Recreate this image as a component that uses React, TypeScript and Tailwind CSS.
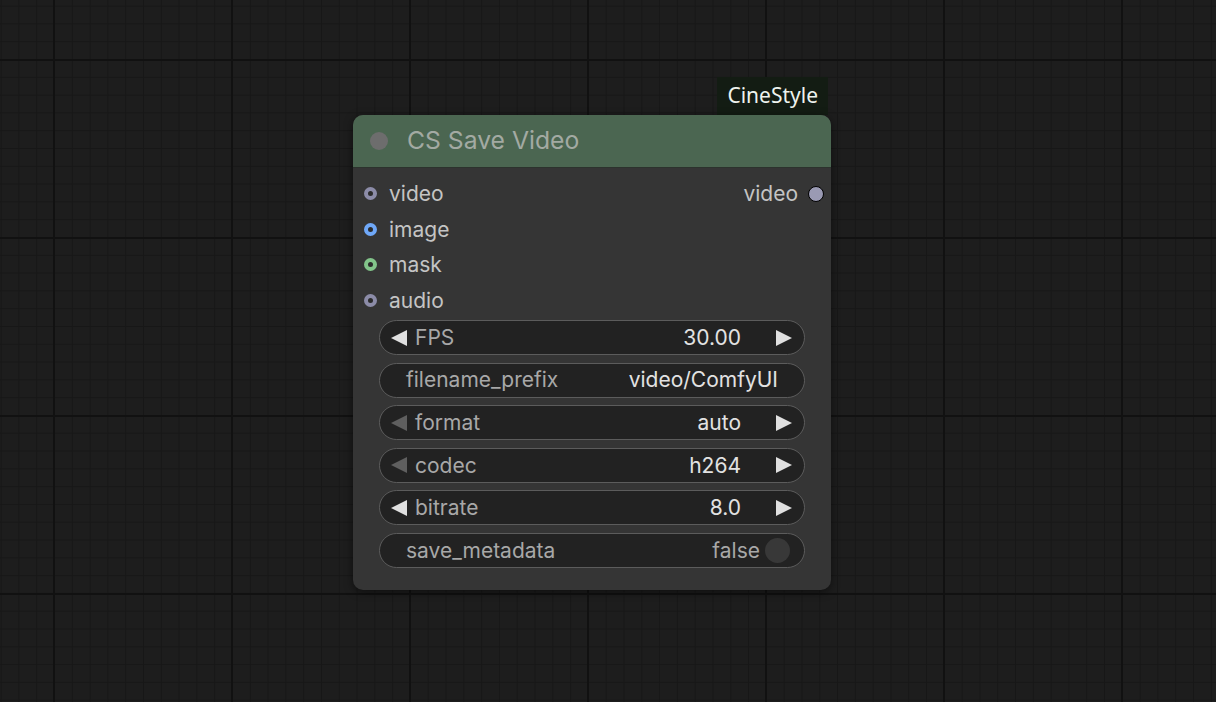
import React from "react";

const font = { fontFamily: "Inter, 'Noto Sans', sans-serif" };

function LeftArrow({ dim }: { dim?: boolean }) {
  return (
    <svg width="18" height="18" viewBox="0 0 18 18" className="shrink-0">
      <polygon points="1,9 17,1 17,17" fill={dim ? "#5f5f5f" : "#e0e0e0"} />
    </svg>
  );
}

function RightArrow() {
  return (
    <svg width="18" height="18" viewBox="0 0 18 18" className="shrink-0">
      <polygon points="17,9 1,1 1,17" fill="#e0e0e0" />
    </svg>
  );
}

function InputRow({ label, color }: { label: string; color: string }) {
  return (
    <div className="flex h-[35.5px] items-center">
      <div className={`ml-[11px] h-[13px] w-[13px] rounded-full border-4 bg-[#2b2b2b] ${color}`} />
      <span className="ml-[12px] text-[21px] text-[#c4c4c4]">{label}</span>
    </div>
  );
}

function NumberWidget({ label, value, dimLeft }: { label: string; value: string; dimLeft?: boolean }) {
  return (
    <div className="flex h-[35px] items-center rounded-full border-[1.5px] border-[#5c5c5c] bg-[#222222] pl-[10px] pr-[11px]">
      <LeftArrow dim={dimLeft} />
      <span className="ml-[7px] flex-1 text-[21px] text-[#a8a8a8]">{label}</span>
      <span className="mr-[34px] text-[21px] text-[#e2e2e2]">{value}</span>
      <RightArrow />
    </div>
  );
}

export default function App() {
  return (
    <div
      className="relative h-[702px] w-[1216px] overflow-hidden bg-[#1d1d1d] bg-[image:linear-gradient(to_right,#111111_2px,transparent_2px),linear-gradient(to_bottom,#111111_2px,transparent_2px),linear-gradient(to_right,#171717_1px,transparent_1px),linear-gradient(to_bottom,#171717_1px,transparent_1px)] bg-[size:178px_178px,178px_178px,17.8px_17.8px,17.8px_17.8px] bg-[position:53px_59px,53px_59px,54px_59px,54px_59px]"
      style={font}
    >
      <div className="absolute left-[353px] top-[77px] flex w-[478px] flex-col">
        <div
          className="mr-[3px] self-end bg-[#131c13] px-[10px] pb-[4px] pt-[3px] text-[21px] leading-[31px] text-[#eef3ee]"
          style={{ fontFamily: "'Noto Sans', sans-serif" }}
        >
          CineStyle
        </div>
        <div className="flex h-[475px] flex-col overflow-hidden rounded-[10px] bg-[#353535] shadow-[0_2px_8px_rgba(0,0,0,0.5)]">
          <div className="flex h-[53px] items-center border-b-[1.5px] border-[#2c332d] bg-[#4b6651] pl-[17px]">
            <div className="h-[18px] w-[18px] rounded-full bg-[#6d6d6d]" />
            <span className="ml-[19px] text-[24.7px] text-[#a3aaa3]">CS Save Video</span>
          </div>
          <div className="relative pt-[8px]">
            <div className="absolute right-[7px] top-[8px] flex h-[35.5px] items-center">
              <span className="text-[21px] text-[#c4c4c4]">video</span>
              <div className="ml-[10px] h-[16px] w-[16px] rounded-full border-[1.5px] border-black bg-[#9a9ab3]" />
            </div>
            <InputRow label="video" color="border-[#8c8ca8]" />
            <InputRow label="image" color="border-[#6fa8f8]" />
            <InputRow label="mask" color="border-[#82c48a]" />
            <InputRow label="audio" color="border-[#8c8ca8]" />
          </div>
          <div className="mx-[26px] mt-[2px] flex flex-col gap-[7.6px]">
            <NumberWidget label="FPS" value="30.00" />
            <div className="flex h-[35px] items-center justify-between rounded-full border-[1.5px] border-[#5c5c5c] bg-[#222222] pl-[26px] pr-[26px]">
              <span className="text-[21px] text-[#a8a8a8]">filename_prefix</span>
              <span className="text-[21px] text-[#e2e2e2]">video/ComfyUI</span>
            </div>
            <NumberWidget label="format" value="auto" dimLeft />
            <NumberWidget label="codec" value="h264" dimLeft />
            <NumberWidget label="bitrate" value="8.0" />
            <div className="flex h-[35px] items-center rounded-full border-[1.5px] border-[#5c5c5c] bg-[#222222] pl-[26px] pr-[14px]">
              <span className="flex-1 text-[21px] text-[#a8a8a8]">save_metadata</span>
              <span className="text-[21px] text-[#a8a8a8]">false</span>
              <div className="ml-[5px] h-[25px] w-[25px] rounded-full bg-[#383838]" />
            </div>
          </div>
        </div>
      </div>
    </div>
  );
}
